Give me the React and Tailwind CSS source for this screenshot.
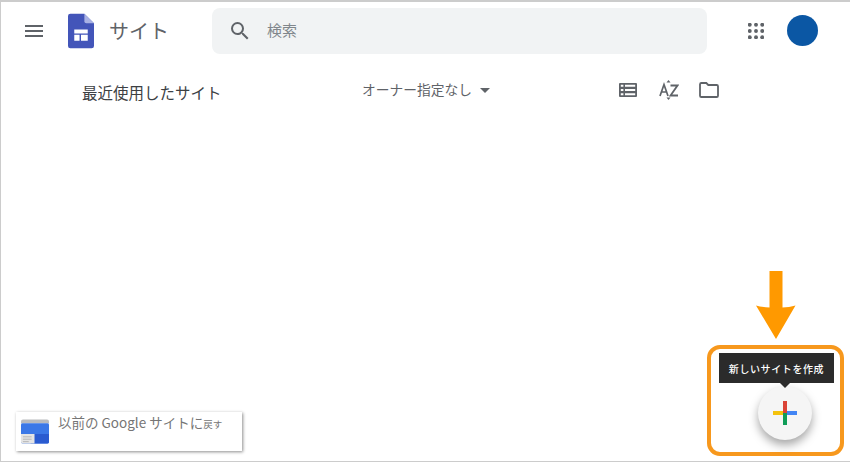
import React from "react";

const MenuIcon = () => (
  <svg width="18" height="12" viewBox="0 0 18 12" fill="#5f6368">
    <path d="M0 0h18v2H0zM0 5h18v2H0zM0 10h18v2H0z" />
  </svg>
);

const SearchIcon = () => (
  <svg width="24" height="24" viewBox="0 0 24 24" fill="#5f6368">
    <path d="M15.500 14h-.79l-.28-.27A6.471 6.471 0 0 0 16 9.500 6.500 6.500 0 1 0 9.500 16c1.610 0 3.090-.59 4.230-1.570l.27.28v.79l5 4.990L20.490 19l-4.990-5zm-6 0C7.010 14 5 11.990 5 9.500S7.010 5 9.500 5 14 7.010 14 9.500 11.990 14 9.500 14z" />
  </svg>
);

const SitesLogo = () => (
  <svg width="26" height="36" viewBox="0 0 27 36">
    <path d="M2.500 0H17l10 10v23.500a2.500 2.500 0 0 1-2.500 2.500h-22A2.500 2.500 0 0 1 0 33.500v-31A2.500 2.500 0 0 1 2.500 0z" fill="#4355b9" />
    <path d="M17 0l10 10H19a2 2 0 0 1-2-2z" fill="#a9b2e4" />
    <path d="M6.500 16.500h14v4h-14zM6.500 22h5.500v6h-5.500zM13.500 22h7v6h-7z" fill="#fff" />
  </svg>
);

const AppsIcon = () => (
  <svg width="16" height="16" viewBox="0 0 18 18" fill="#5f6368">
    {[2, 9, 16].map((cy) =>
      [2, 9, 16].map((cx) => <circle key={`${cx}-${cy}`} cx={cx} cy={cy} r="2.200" />)
    )}
  </svg>
);

const ListIcon = () => (
  <svg width="18" height="14" viewBox="0 0 18 14" fill="#5f6368">
    <path d="M1 0h16a1 1 0 0 1 1 1v12a1 1 0 0 1-1 1H1a1 1 0 0 1-1-1V1a1 1 0 0 1 1-1zm.8 1.800v2h2.600v-2zm4.200 0v2h10.200v-2zM1.800 6v2h2.600V6zM6 6v2h10.200V6zM1.800 10.200v2h2.600v-2zm4.200 0v2h10.200v-2z" fillRule="evenodd" />
  </svg>
);

const SortIcon = () => (
  <svg width="20" height="20" viewBox="0 0 20 20" fill="none" stroke="#5f6368">
    <path d="M7.500 2.500L9.500 0l2 2.500z" fill="#5f6368" stroke="none" />
    <path d="M7.500 17.500l2 2.500 2-2.500z" fill="#5f6368" stroke="none" />
    <path d="M1 16L5 4.500 9 16M2.500 12h5" strokeWidth="1.700" />
    <path d="M11.500 5.500h7L11.500 15.500h7.500" strokeWidth="1.800" />
  </svg>
);

const FolderIcon = () => (
  <svg width="20" height="16" viewBox="0 0 20 16" fill="none" stroke="#5f6368" strokeWidth="1.800">
    <path d="M1 2.200A1.300 1.300 0 0 1 2.300 1h5l2 2h8.400A1.300 1.300 0 0 1 19 4.300v9.400a1.300 1.300 0 0 1-1.300 1.300H2.300A1.300 1.300 0 0 1 1 13.700z" />
  </svg>
);

const OldSitesIcon = () => (
  <svg width="28" height="25" viewBox="0 0 29 25">
    <path d="M2 0h25a2 2 0 0 1 2 2v2H0V2a2 2 0 0 1 2-2z" fill="#b9bbbe" />
    <rect y="4" width="29" height="21" rx="1.500" fill="#3b78e7" />
    <path d="M10 15h19v8a2 2 0 0 1-2 2H10z" fill="#2a5bd0" />
    <path d="M0 15h14v10H2a2 2 0 0 1-2-2z" fill="#e4e4e4" />
    <path d="M2 18h9M2 20.500h9M2 23h6" stroke="#b5b5b5" strokeWidth="1" />
  </svg>
);

const DownArrow = () => (
  <svg width="40" height="68" viewBox="0 0 40 68">
    <path d="M13.500 0h13v36.500c4 0 9-1 13-2L20 68 0 34.500c4 1 9 2 13.500 2z" fill="#ff9900" />
  </svg>
);

const PlusIcon = () => (
  <svg width="24" height="24" viewBox="0 0 24 24">
    <rect x="0" y="10" width="12" height="4" fill="#f4c20d" />
    <rect x="12" y="10" width="12" height="4" fill="#4285f4" />
    <rect x="10" y="0" width="4" height="12" fill="#db4437" />
    <rect x="10" y="12" width="4" height="12" fill="#0f9d58" />
  </svg>
);

export default function App() {
  return (
    <div
      className="relative w-[850px] h-[462px] overflow-hidden bg-white border-t-2 border-l border-b border-[#cccccc]"
      style={{ fontFamily: '"Noto Sans CJK JP", Roboto, sans-serif' }}
    >
      <header className="flex items-center h-[57px]">
        <div className="ml-[24px]"><MenuIcon /></div>
        <div className="ml-[25px]"><SitesLogo /></div>
        <span className="ml-[15px] text-[20px] text-[#5f6368]">サイト</span>
        <div className="ml-[43px] flex items-center w-[495px] h-[46px] rounded-lg bg-[#f1f3f4]">
          <div className="ml-[16px]"><SearchIcon /></div>
          <span className="ml-[15px] text-[15px] text-[#80868b]">検索</span>
        </div>
        <div className="ml-[41px]"><AppsIcon /></div>
        <div className="ml-[23px] w-[31px] h-[31px] rounded-full bg-[#0b57a4]"></div>
      </header>

      <div className="flex items-center h-[62px]">
        <span className="ml-[81px] mt-[6px] w-[280px] text-[15.500px] text-[#3c4043]">最近使用したサイト</span>
        <span className="mb-[2px] text-[13.750px] text-[#5f6368]">オーナー指定なし</span>
        <span className="ml-[8px] w-0 h-0 border-x-[5px] border-x-transparent border-t-[5px] border-t-[#5f6368]"></span>
        <div className="ml-[129px]"><ListIcon /></div>
        <div className="ml-[22px]"><SortIcon /></div>
        <div className="ml-[20px]"><FolderIcon /></div>
      </div>

      <div className="absolute left-[15px] top-[410px] flex items-start w-[226px] h-[39px] bg-white shadow-[1px_1px_3px_rgba(0,0,0,0.45)]">
        <div className="ml-[5px] mt-[7px]"><OldSitesIcon /></div>
        <span className="ml-[9px] text-[13.500px] text-[#757575]">
          以前の Google サイトに<span className="text-[9.500px]">戻す</span>
        </span>
      </div>

      <div className="absolute left-[755px] top-[269px]"><DownArrow /></div>

      <div className="absolute left-[706px] top-[343px] w-[137px] h-[111px] rounded-[13px] border-4 border-[#f7981d]"></div>

      <div className="absolute left-[757px] top-[384px] flex items-center justify-center w-[54px] h-[54px] rounded-full bg-[#f5f5f5] shadow-[0_5px_10px_rgba(0,0,0,0.35)]">
        <PlusIcon />
      </div>

      <div className="absolute left-[718px] top-[351px] flex items-center justify-center w-[115px] h-[30px] bg-[#2b2b2b] text-[10px] tracking-[0.600px] font-medium text-white">
        新しいサイトを作成
      </div>
      <div className="absolute left-[779px] top-[381px] w-0 h-0 border-x-[5px] border-x-transparent border-t-[5px] border-t-[#2b2b2b]"></div>
    </div>
  );
}
